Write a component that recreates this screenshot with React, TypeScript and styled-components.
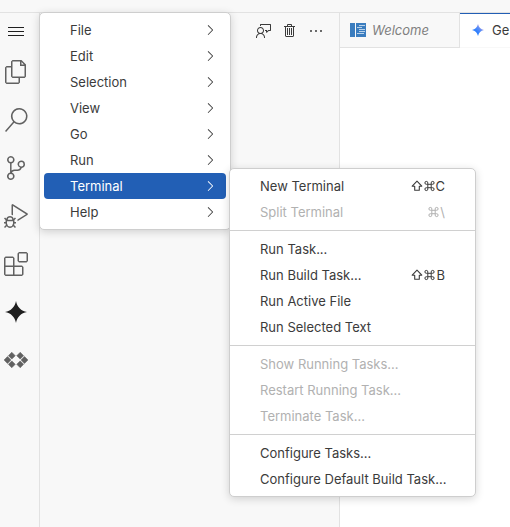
import React from "react";
import styled, { createGlobalStyle } from "styled-components";
import {
  VscChevronRight,
  VscDebugAlt,
  VscEllipsis,
  VscExtensions,
  VscFeedback,
  VscFiles,
  VscMenu,
  VscSearch,
  VscSourceControl,
  VscTrash,
} from "react-icons/vsc";

const GlobalStyle = createGlobalStyle`
  * { box-sizing: border-box; }
  body {
    margin: 0;
    background: #ffffff;
    color: #333333;
    font-family: Inter, "Liberation Sans", sans-serif;
    font-size: 13px;
  }
  button {
    border: 0;
    padding: 0;
    background: transparent;
    color: inherit;
    font: inherit;
  }
`;

const Workbench = styled.div`
  display: flex;
  flex-direction: column;
  min-height: 100vh;
  overflow: hidden;
`;

const TitleBar = styled.header`
  height: 13px;
  flex: none;
  background: #f8f8f8;
  border-bottom: 1px solid #e2e2e2;
`;

const Body = styled.div`
  display: flex;
  flex: 1;
`;

const ActivityBar = styled.nav`
  position: relative;
  display: flex;
  flex-direction: column;
  width: 40px;
  flex: none;
  padding-right: 7px;
  background: #f8f8f8;
  border-right: 1px solid #e2e2e2;
`;

const MenuButton = styled.button`
  display: flex;
  align-items: center;
  justify-content: center;
  height: 35px;
  color: #1f1f1f;
`;

const ActivityButton = styled.button<{ $strong?: boolean }>`
  display: flex;
  align-items: center;
  justify-content: center;
  height: 48px;
  color: ${(p) => (p.$strong ? "#1f1f1f" : "#616161")};
`;

const SideBar = styled.aside`
  width: 300px;
  flex: none;
  background: #f8f8f8;
  border-right: 1px solid #e2e2e2;
`;

const SideActions = styled.div`
  display: flex;
  align-items: center;
  justify-content: flex-end;
  gap: 10px;
  height: 35px;
  padding-right: 15px;
  color: #3b3b3b;
`;

const IconButton = styled.button`
  display: flex;
`;

const Editor = styled.main`
  flex: 1;
  min-width: 0;
  overflow: hidden;
`;

const Tabs = styled.div`
  display: flex;
  height: 35px;
  background: #f8f8f8;
`;

const Tab = styled.button<{ $active?: boolean }>`
  display: flex;
  align-items: center;
  flex: ${(p) => (p.$active ? "1" : "none")};
  gap: 6px;
  min-width: 0;
  width: ${(p) => (p.$active ? "auto" : "120px")};
  padding-left: 10px;
  white-space: nowrap;
  color: ${(p) => (p.$active ? "#3b3b3b" : "#808080")};
  font-style: ${(p) => (p.$active ? "normal" : "italic")};
  background: ${(p) => (p.$active ? "#ffffff" : "#f8f8f8")};
  border-bottom: 1px solid ${(p) => (p.$active ? "#f8f8f8" : "#e2e2e2")};
  box-shadow: ${(p) => (p.$active ? "inset 0 1px #225fb5" : "inset -1px 0 #e2e2e2")};
`;

const Menu = styled.div<{ $sub?: boolean }>`
  position: absolute;
  z-index: 1;
  top: ${(p) => (p.$sub ? "155px" : "-1px")};
  left: ${(p) => (p.$sub ? "189px" : "39px")};
  width: ${(p) => (p.$sub ? "247px" : "192px")};
  padding: 4px 0;
  background: #ffffff;
  border: 1px solid #cecece;
  border-radius: 5px;
  box-shadow: 0 2px 8px rgba(0, 0, 0, 0.16);
`;

const MenuItem = styled.button<{ $selected?: boolean; $sub?: boolean }>`
  display: flex;
  align-items: center;
  justify-content: space-between;
  width: calc(100% - 8px);
  height: 26px;
  margin: 0 4px;
  padding: 0 ${(p) => (p.$sub ? "26px" : "8px")} 0 26px;
  border-radius: 4px;
  white-space: nowrap;
  color: ${(p) => (p.$selected ? "#ffffff" : "#3b3b3b")};
  background: ${(p) => (p.$selected ? "#225fb5" : "transparent")};
  &:disabled {
    color: #b1b1b1;
  }
`;

const Shortcut = styled.span`
  display: flex;
  align-items: center;
  gap: 1px;
`;

const Separator = styled.hr`
  height: 1px;
  margin: 5px 0;
  border: 0;
  background: #d0d0d0;
`;

const ShiftKey = () => (
  <svg width="12" height="12" viewBox="0 0 12 12" fill="none" stroke="currentColor" strokeLinejoin="round" aria-label="Shift">
    <path d="M6 1.2 10.8 6.2H8.3V10.3H3.7V6.2H1.2Z" strokeWidth="1.1" />
  </svg>
);

const CommandKey = () => (
  <svg width="11" height="12" viewBox="0 0 11 12" fill="none" stroke="currentColor" aria-label="Command">
    <path
      d="M3.8 4.3H7.2V7.7H3.8ZM3.8 4.3H2.5A1.45 1.45 0 1 1 3.8 2.9ZM7.2 4.3V2.9A1.45 1.45 0 1 1 8.5 4.3ZM7.2 7.7H8.5A1.45 1.45 0 1 1 7.2 9.1ZM3.8 7.7V9.1A1.45 1.45 0 1 1 2.5 7.7Z"
      strokeWidth="1"
    />
  </svg>
);

const Sparkle = () => (
  <svg width="24" height="24" viewBox="0 0 24 24" fill="currentColor">
    <path d="M12 1C12.9 6.8 17.2 11.1 23 12C17.2 12.9 12.9 17.2 12 23C11.1 17.2 6.8 12.9 1 12C6.8 11.1 11.1 6.8 12 1Z" />
  </svg>
);

const Diamonds = () => (
  <svg width="24" height="24" viewBox="0 0 24 24" fill="currentColor">
    <path d="M7.8 4.3 11.2 7.7 7.8 11.1 4.4 7.7ZM16.2 4.3 19.6 7.7 16.2 11.1 12.8 7.7ZM3.5 8.6 6.9 12 3.5 15.4.1 12ZM20.5 8.6 23.9 12 20.5 15.4 17.1 12ZM7.8 12.9 11.2 16.3 7.8 19.7 4.4 16.3ZM16.2 12.9 19.6 16.3 16.2 19.7 12.8 16.3Z" stroke="currentColor" strokeWidth="0.6" />
  </svg>
);

const WelcomeIcon = () => (
  <svg width="16" height="14" viewBox="0 0 16 14">
    <path d="M0 0H5V14H0ZM6 0H16V14H6Z" fill="#3b7dbf" />
    <path d="M9 2.5H15M7 4.5H12M9 6.5H15M9 8.5H15M7 10.5H14" stroke="#b9d2ea" strokeWidth="1" />
  </svg>
);

const GeminiIcon = () => (
  <svg width="16" height="14" viewBox="0 0 16 14">
    <defs>
      <linearGradient id="gemini" x1="0" y1="1" x2="1" y2="0">
        <stop offset="0.3" stopColor="#217bfe" />
        <stop offset="0.6" stopColor="#5b8df8" />
        <stop offset="0.8" stopColor="#b79bdc" />
      </linearGradient>
    </defs>
    <path d="M8 1C8.8 4.3 10.7 6.2 14 7C10.7 7.8 8.8 9.7 8 13C7.2 9.7 5.3 7.8 2 7C5.3 6.2 7.2 4.3 8 1Z" fill="url(#gemini)" />
  </svg>
);

const activities = [
  { label: "Explorer", icon: <VscFiles size={24} /> },
  { label: "Search", icon: <VscSearch size={24} /> },
  { label: "Source Control", icon: <VscSourceControl size={24} /> },
  { label: "Run and Debug", icon: <VscDebugAlt size={24} /> },
  { label: "Extensions", icon: <VscExtensions size={24} /> },
  { label: "Gemini", icon: <Sparkle />, strong: true },
  { label: "Cloud", icon: <Diamonds /> },
];

const mainMenu = ["File", "Edit", "Selection", "View", "Go", "Run", "Terminal", "Help"];

type Entry = { label: string; disabled?: boolean; shift?: boolean; keyName?: string };

const terminalMenu: Entry[][] = [
  [
    { label: "New Terminal", shift: true, keyName: "C" },
    { label: "Split Terminal", disabled: true, keyName: "\\" },
  ],
  [
    { label: "Run Task..." },
    { label: "Run Build Task...", shift: true, keyName: "B" },
    { label: "Run Active File" },
    { label: "Run Selected Text" },
  ],
  [
    { label: "Show Running Tasks...", disabled: true },
    { label: "Restart Running Task...", disabled: true },
    { label: "Terminate Task...", disabled: true },
  ],
  [{ label: "Configure Tasks..." }, { label: "Configure Default Build Task..." }],
];

export default function App() {
  return (
    <Workbench>
      <GlobalStyle />
      <TitleBar />
      <Body>
        <ActivityBar>
          <MenuButton aria-label="Application Menu">
            <VscMenu size={16} />
          </MenuButton>
          {activities.map((a) => (
            <ActivityButton key={a.label} aria-label={a.label} $strong={a.strong}>
              {a.icon}
            </ActivityButton>
          ))}
          <Menu role="menu">
            {mainMenu.map((label) => (
              <MenuItem key={label} role="menuitem" $selected={label === "Terminal"}>
                {label}
                <VscChevronRight size={16} />
              </MenuItem>
            ))}
            <Menu role="menu" $sub>
              {terminalMenu.map((group, i) => (
                <React.Fragment key={i}>
                  {i > 0 && <Separator />}
                  {group.map((e) => (
                    <MenuItem key={e.label} role="menuitem" disabled={e.disabled} $sub>
                      {e.label}
                      {e.keyName && (
                        <Shortcut>
                          {e.shift && <ShiftKey />}
                          <CommandKey />
                          {e.keyName}
                        </Shortcut>
                      )}
                    </MenuItem>
                  ))}
                </React.Fragment>
              ))}
            </Menu>
          </Menu>
        </ActivityBar>
        <SideBar>
          <SideActions>
            <IconButton aria-label="Send Feedback">
              <VscFeedback size={16} />
            </IconButton>
            <IconButton aria-label="Delete">
              <VscTrash size={16} />
            </IconButton>
            <IconButton aria-label="More Actions">
              <VscEllipsis size={16} />
            </IconButton>
          </SideActions>
        </SideBar>
        <Editor>
          <Tabs role="tablist">
            <Tab role="tab">
              <WelcomeIcon />
              Welcome
            </Tab>
            <Tab role="tab" $active>
              <GeminiIcon />
              Ge
            </Tab>
          </Tabs>
        </Editor>
      </Body>
    </Workbench>
  );
}
